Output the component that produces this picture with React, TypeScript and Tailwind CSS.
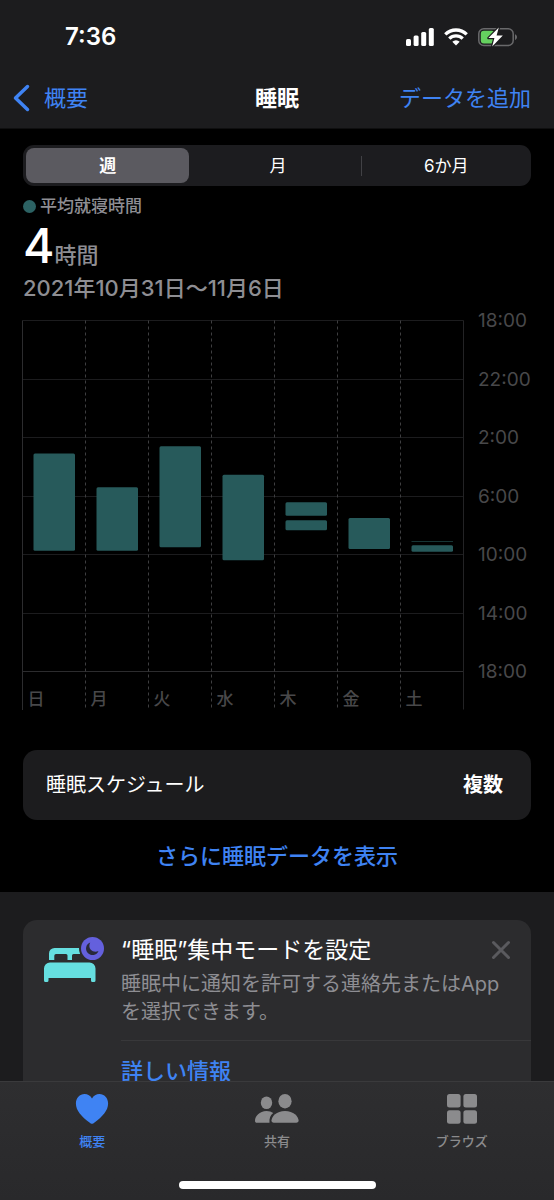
import { useState } from "react";

const ranges = ["週", "月", "6か月"];

const hourLabels = ["18:00", "22:00", "2:00", "6:00", "10:00", "14:00", "18:00"];

// start and end are hours counted from 18:00 of the evening before
const week = [
  { day: "日", sleep: [{ start: 9.1, end: 15.75 }] },
  { day: "月", sleep: [{ start: 11.4, end: 15.75 }] },
  { day: "火", sleep: [{ start: 8.6, end: 15.5 }] },
  { day: "水", sleep: [{ start: 10.55, end: 16.4 }] },
  {
    day: "木",
    sleep: [
      { start: 12.42, end: 13.35 },
      { start: 13.66, end: 14.34 },
    ],
  },
  { day: "金", sleep: [{ start: 13.5, end: 15.63 }] },
  {
    day: "土",
    sleep: [
      { start: 15.08, end: 15.12 },
      { start: 15.36, end: 15.82 },
    ],
  },
];

const CHART_TOP = 10.5;
const CHART_LEFT = -0.5;
const COLUMN = 63;
const HOUR = 14.625;
const CHART_WIDTH = COLUMN * 7;
const CHART_HEIGHT = HOUR * 24;

const SignalIcon = () => (
  <svg width="28" height="18" viewBox="0 0 28 18" fill="#fff" aria-hidden="true">
    <rect x="0" y="11" width="5" height="7" rx="1.5" />
    <rect x="7.6" y="7.5" width="5" height="10.5" rx="1.5" />
    <rect x="15.2" y="4" width="5" height="14" rx="1.5" />
    <rect x="22.8" y="0" width="5" height="18" rx="1.5" />
  </svg>
);

const WifiIcon = () => (
  <svg width="24" height="18" viewBox="0 0 24 18" aria-hidden="true">
    <g fill="none" stroke="#fff" strokeWidth="3.3">
      <path d="M1.3 6.4a15.2 15.2 0 0 1 21.4 0" />
      <path d="M5.3 10.7a9.5 9.5 0 0 1 13.4 0" />
    </g>
    <path d="M12 17.6l-3.7-3.8a5.3 5.3 0 0 1 7.4 0z" fill="#fff" />
  </svg>
);

const BatteryIcon = () => (
  <svg width="40" height="22" viewBox="0 0 40 22" aria-hidden="true">
    <rect x="0.8" y="2.8" width="34.4" height="16.6" rx="5" fill="none" stroke="#69696b" strokeWidth="1.5" />
    <path d="M37 8.2c1.3.5 2 1.6 2 2.9s-.7 2.4-2 2.9z" fill="#69696b" />
    <rect x="2.8" y="4.8" width="14" height="12.6" rx="3" fill="#65d15f" />
    <path
      d="M20.8 1.6L10.4 12.1h6L14.2 20.4 24.8 9.6h-6.2z"
      fill="#fff"
      stroke="#1c1c1e"
      strokeWidth="2.4"
      strokeLinejoin="round"
      paintOrder="stroke"
    />
  </svg>
);

const BedIcon = () => (
  <svg width="60" height="48" viewBox="0 0 60 48" aria-hidden="true">
    <path
      d="M5 24v-6.5a5.5 5.5 0 0 1 5.500-5.500H36v6h-6.500a1.500 1.500 0 0 0-1.500 1.500V24h-4.500v-4.500A1.500 1.500 0 0 0 22 18H12a1.700 1.700 0 0 0-1.700 1.700V24z"
      fill="#66dfe0"
    />
    <path
      d="M0 32.500A6 6 0 0 1 6 26.500H45.500a6 6 0 0 1 6 6V44.500a1.500 1.500 0 0 1-1.500 1.500h-1.500a1.500 1.500 0 0 1-1.500-1.500V42H4.500v2.500A1.500 1.500 0 0 1 3 46H1.500A1.500 1.500 0 0 1 0 44.500z"
      fill="#66dfe0"
    />
    <circle cx="48.500" cy="12.500" r="13.500" fill="#2c2c2e" />
    <circle cx="48.500" cy="12.500" r="11.500" fill="#6460dd" />
    <path d="M46.200 6.500a6.500 6.500 0 1 0 8.300 8.600c-3 1.100-6 .5-7.700-1.400-1.700-1.900-1.900-4.500-.6-7.200z" fill="#29293b" />
  </svg>
);

const HeartIcon = () => (
  <svg width="34" height="32" viewBox="0 0 34 32" fill="currentColor" aria-hidden="true">
    <path d="M17 30.800C16.300 30.800 15.500 30.200 14.800 29.700 6.500 23.800.9 17.700.9 10.600.9 5 4.700 1 9.600 1c3.200 0 5.800 1.700 7.400 4.500C18.600 2.700 21.200 1 24.400 1c4.900 0 8.700 4 8.700 9.600 0 7.100-5.600 13.200-13.900 19.100-.7.500-1.500 1.100-2.200 1.100z" />
  </svg>
);

const PeopleIcon = () => (
  <svg width="44" height="32" viewBox="0 0 44 32" fill="currentColor" aria-hidden="true">
    <ellipse cx="11.500" cy="9.700" rx="5.700" ry="6.300" />
    <ellipse cx="30" cy="8.200" rx="6.600" ry="7.200" />
    <path d="M2 29.800C.7 29.800 0 29 0 27.700c0-4.300 4.500-9.700 11.500-9.700 2.700 0 5 .8 6.700 1.900-2.700 2.200-4.200 5.200-3.700 9.900z" />
    <path d="M18.800 29.800c-1.600 0-2.300-.9-2.300-2.200 0-4 5-9.700 13.500-9.700s13.600 5.700 13.600 9.700c0 1.300-.8 2.200-2.400 2.200z" />
  </svg>
);

const BrowseIcon = () => (
  <svg width="30" height="32" viewBox="0 0 30 32" fill="currentColor" aria-hidden="true">
    <rect x="0" y="1" width="13.600" height="13.600" rx="2.500" />
    <rect x="16.400" y="1" width="13.600" height="13.600" rx="2.500" />
    <rect x="0" y="17.200" width="13.600" height="13.600" rx="2.500" />
    <rect x="16.400" y="17.200" width="13.600" height="13.600" rx="2.500" />
  </svg>
);

const tabs = [
  { label: "概要", icon: HeartIcon },
  { label: "共有", icon: PeopleIcon },
  { label: "ブラウズ", icon: BrowseIcon },
];

const SleepChart = () => (
  <svg viewBox="0 0 508 400" className="mt-2 block w-full overflow-visible" role="img" aria-label="睡眠">
    {hourLabels.map((label, i) => {
      const y = CHART_TOP + i * 4 * HOUR;
      return (
        <g key={i}>
          <line
            x1={CHART_LEFT}
            x2={CHART_LEFT + CHART_WIDTH}
            y1={Math.floor(y) + 0.5}
            y2={Math.floor(y) + 0.5}
            stroke={i === 6 ? "#2c2c2e" : "#1c1c1e"}
          />
          <text x="455" y={y + 6.5} fontSize="19" fill="#48484a">
            {label}
          </text>
        </g>
      );
    })}

    {week.map(({ day, sleep }, i) => {
      const x = CHART_LEFT + i * COLUMN;
      return (
        <g key={day}>
          <line
            x1={x}
            x2={x}
            y1={CHART_TOP}
            y2="400"
            stroke={i === 0 ? "#2c2c2e" : "#3e3e40"}
            strokeDasharray={i === 0 ? undefined : "3 3"}
          />
          {sleep.map(({ start, end }) => (
            <rect
              key={start}
              x={x + 11}
              y={CHART_TOP + start * HOUR}
              width="41.5"
              height={(end - start) * HOUR}
              rx={end - start > 0.1 ? 1.5 : 0}
              fill="#275a5b"
            />
          ))}
          <text x={x + 5} y="395" fontSize="17" fontWeight="500" fill="#48484a">
            {day}
          </text>
        </g>
      );
    })}

    <line
      x1={CHART_LEFT + CHART_WIDTH}
      x2={CHART_LEFT + CHART_WIDTH}
      y1={CHART_TOP}
      y2={CHART_TOP + CHART_HEIGHT + 38}
      stroke="#232325"
    />
  </svg>
);

const App = () => {
  const [range, setRange] = useState("週");
  const [activeTab, setActiveTab] = useState("概要");
  const [showCard, setShowCard] = useState(true);

  return (
    <div
      lang="ja"
      className="flex h-screen flex-col overflow-hidden bg-[#1c1c1e] font-['Inter','Noto_Sans_CJK_JP',sans-serif] text-white"
    >
      <header className="shrink-0 border-b border-[#0f0f10]">
        <div className="flex h-[68px] items-center justify-between pt-1.5 pr-9 pl-[65px]">
          <span className="text-2xl leading-8 font-semibold">7:36</span>
          <div className="flex items-center gap-2.5">
            <SignalIcon />
            <WifiIcon />
            <BatteryIcon />
          </div>
        </div>
        <nav className="grid h-[60px] grid-cols-[1fr_auto_1fr] items-center px-[13px] text-[22px] leading-8">
          <a href="#summary" className="flex items-center gap-3.5 text-[#3f83f3]">
            <svg width="17" height="28" viewBox="0 0 17 28" fill="none" aria-hidden="true">
              <path d="M14.500 2.500L2.500 14l12 11.500" stroke="currentColor" strokeWidth="3.500" strokeLinecap="round" strokeLinejoin="round" />
            </svg>
            概要
          </a>
          <h1 className="font-semibold">睡眠</h1>
          <button type="button" className="justify-self-end pr-2.5 text-[#3f83f3]">
            データを追加
          </button>
        </nav>
      </header>

      <main className="min-h-0 flex-1 overflow-y-auto [scrollbar-width:none]">
        <section className="bg-black px-[23px] pt-4 pb-5">
          <div role="tablist" className="grid grid-cols-3 rounded-[11px] bg-[#1c1c1f]">
            {ranges.map((item, i) => (
              <div key={item} className="flex items-center p-[3px]">
                <button
                  type="button"
                  role="tab"
                  aria-selected={range === item}
                  onClick={() => setRange(item)}
                  className={`h-[35px] flex-1 rounded-lg text-[17px] leading-6 ${
                    range === item ? "bg-[#5b5a60] font-semibold" : "font-normal"
                  }`}
                >
                  {item}
                </button>
                {i === 1 && <span className="-mr-[3px] h-5 w-px bg-[#414145]" />}
              </div>
            ))}
          </div>

          <p className="mt-2 flex items-center gap-1 text-[17px] leading-6 font-medium text-[#8e8e93]">
            <span className="size-[13px] rounded-full bg-[#2c6263]" />
            平均就寝時間
          </p>
          <p className="flex items-baseline text-5xl leading-[56px] font-medium">
            4
            <span className="text-[22px] leading-8 text-[#8e8e93]">時間</span>
          </p>
          <p className="text-[22px] leading-7 font-medium text-[#8e8e93]">2021年10月31日〜11月6日</p>

          <SleepChart />

          <div className="mt-10 flex items-center justify-between rounded-[14px] bg-[#1c1c1e] py-[21px] pr-7 pl-[23px] text-xl leading-7">
            <span>睡眠スケジュール</span>
            <span className="font-semibold">複数</span>
          </div>

          <a href="#more" className="mt-5 block text-center text-[22px] leading-8 font-medium text-[#3f83f3]">
            さらに睡眠データを表示
          </a>
        </section>

        <section className="px-[23px] pt-7 pb-6">
          {showCard && (
            <article className="flex rounded-[14px] bg-[#2c2c2e] pt-3.5 pl-[21px]">
              <div className="w-[77px] shrink-0 pt-0.5">
                <BedIcon />
              </div>
              <div className="min-w-0 flex-1">
                <div className="flex items-center justify-between pr-5">
                  <h2 className="text-[23px] leading-8">“睡眠”集中モードを設定</h2>
                  <button type="button" aria-label="閉じる" onClick={() => setShowCard(false)}>
                    <svg width="20" height="20" viewBox="0 0 20 20" aria-hidden="true">
                      <path d="M2.500 2.500l15 15M17.500 2.500l-15 15" stroke="#5a5a5e" strokeWidth="3" strokeLinecap="round" />
                    </svg>
                  </button>
                </div>
                <p className="mt-1 pr-6 text-xl leading-7 text-[#8e8e93]">
                  睡眠中に通知を許可する連絡先またはAppを選択できます。
                </p>
                <a
                  href="#details"
                  className="mt-3.5 block border-t border-[#38383a] pt-3.5 pb-4 text-[22px] leading-8 font-medium text-[#3f83f3]"
                >
                  詳しい情報
                </a>
              </div>
            </article>
          )}
        </section>
      </main>

      <footer className="shrink-0 border-t border-[#3a3a3c] bg-linear-to-b from-[#2e2e30] to-[#29292b]">
        <nav className="grid grid-cols-3 pt-[11px]">
          {tabs.map(({ label, icon: Icon }) => (
            <button
              key={label}
              type="button"
              onClick={() => setActiveTab(label)}
              className={`flex flex-col items-center gap-1.5 text-[13px] leading-5 font-medium ${
                activeTab === label ? "text-[#3f83f3]" : "text-[#8b8b8d]"
              }`}
            >
              <Icon />
              {label}
            </button>
          ))}
        </nav>
        <div className="mx-auto mt-[30px] mb-[11px] h-2 w-[197px] rounded-full bg-white" />
      </footer>
    </div>
  );
};

export default App;
